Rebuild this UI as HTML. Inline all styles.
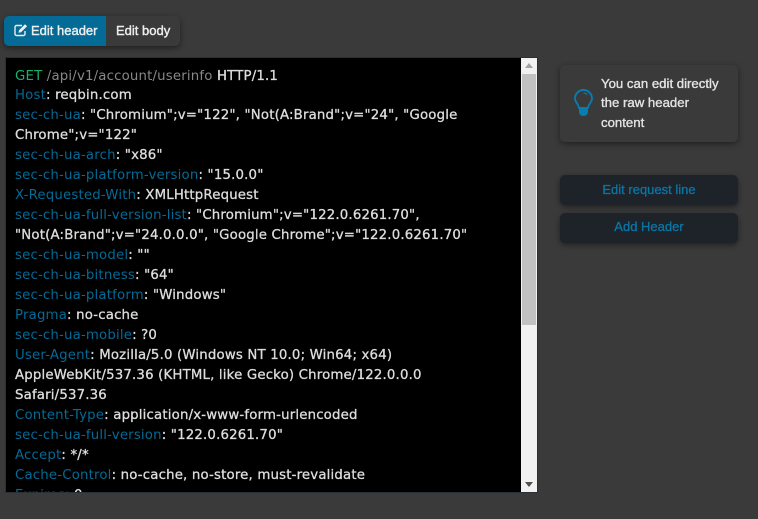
<!DOCTYPE html>
<html>
<head>
<meta charset="utf-8">
<style>
html,body{margin:0;padding:0;width:758px;height:519px;overflow:hidden;background:#3a3a3a;font-family:"Liberation Sans",sans-serif;}
.abs{position:absolute;box-sizing:border-box;}
.tabs{left:4px;top:16px;width:176px;height:30px;border-radius:5px;background:#3a3a3a;box-shadow:0 2px 6px rgba(0,0,0,.45);overflow:hidden;}
.tab1{position:absolute;left:0;top:0;width:102px;height:30px;background:#046a96;}
.tl{position:absolute;top:7px;font-size:13px;line-height:16px;color:#eee;white-space:nowrap;-webkit-text-stroke:.4px #eee;}
.editor{left:5px;top:57px;width:533px;height:436px;background:#000;border:1px solid #2b2f36;overflow:hidden;}
.ln{position:absolute;left:9px;font-family:"DejaVu Sans",sans-serif;font-size:13.3px;letter-spacing:.18px;line-height:20px;color:#ddd;white-space:nowrap;-webkit-text-stroke:.3px #ddd;}
.b{color:#046a96;-webkit-text-stroke:0}
.g{color:#14b46e;-webkit-text-stroke:0}
.p{color:#888;-webkit-text-stroke:0}
.sb{position:absolute;left:515px;top:0;width:16px;height:434px;background:#f1f1f1;}
.th{position:absolute;left:1px;top:16px;width:14px;height:251px;background:#c1c1c1;}
.card{left:560px;top:65px;width:178px;height:77px;background:#3a3a3a;border-radius:5px;box-shadow:0 2px 7px rgba(0,0,0,.45);}
.ct{position:absolute;left:41px;font-size:13.2px;line-height:19px;color:#e4e4e4;white-space:nowrap;-webkit-text-stroke:.35px #e4e4e4;}
.btn{left:560px;width:178px;height:30px;background:#1e232a;border-radius:5px;box-shadow:0 2px 6px rgba(0,0,0,.45);color:#0a76a6;font-size:13px;text-align:center;-webkit-text-stroke:.3px #0a76a6;}
</style>
</head>
<body>
<div class="abs tabs">
  <div class="tab1"></div>
  <svg style="position:absolute;left:10px;top:7px" width="14" height="14" viewBox="0 0 14 14"><path d="M11 8v3a1.500 1.500 0 0 1-1.500 1.500h-7A1.500 1.500 0 0 1 1 11V4a1.500 1.500 0 0 1 1.500-1.500H8" fill="none" stroke="#eee" stroke-width="1.400"/><path d="M4.500 9.800l.5-2.600L11 1.200l2.100 2.100-6 6z" fill="#eee"/></svg>
  <span class="tl" style="left:27px">Edit header</span>
  <span class="tl" style="left:112px">Edit body</span>
</div>
<div class="abs editor">
  <div class="ln" style="top:9px"><span class="g">GET</span> <span class="p">/api/v1/account/userinfo</span> HTTP/1.1</div>
  <div class="ln" style="top:28px"><span class="b">Host</span>: reqbin.com</div>
  <div class="ln" style="top:48px"><span class="b">sec-ch-ua</span>: "Chromium";v="122", "Not(A:Brand";v="24", "Google</div>
  <div class="ln" style="top:68px">Chrome";v="122"</div>
  <div class="ln" style="top:88px"><span class="b">sec-ch-ua-arch</span>: "x86"</div>
  <div class="ln" style="top:108px"><span class="b">sec-ch-ua-platform-version</span>: "15.0.0"</div>
  <div class="ln" style="top:128px"><span class="b">X-Requested-With</span>: XMLHttpRequest</div>
  <div class="ln" style="top:148px"><span class="b">sec-ch-ua-full-version-list</span>: "Chromium";v="122.0.6261.70",</div>
  <div class="ln" style="top:168px">"Not(A:Brand";v="24.0.0.0", "Google Chrome";v="122.0.6261.70"</div>
  <div class="ln" style="top:188px"><span class="b">sec-ch-ua-model</span>: ""</div>
  <div class="ln" style="top:208px"><span class="b">sec-ch-ua-bitness</span>: "64"</div>
  <div class="ln" style="top:228px"><span class="b">sec-ch-ua-platform</span>: "Windows"</div>
  <div class="ln" style="top:248px"><span class="b">Pragma</span>: no-cache</div>
  <div class="ln" style="top:268px"><span class="b">sec-ch-ua-mobile</span>: ?0</div>
  <div class="ln" style="top:288px"><span class="b">User-Agent</span>: Mozilla/5.0 (Windows NT 10.0; Win64; x64)</div>
  <div class="ln" style="top:308px">AppleWebKit/537.36 (KHTML, like Gecko) Chrome/122.0.0.0</div>
  <div class="ln" style="top:328px">Safari/537.36</div>
  <div class="ln" style="top:348px"><span class="b">Content-Type</span>: application/x-www-form-urlencoded</div>
  <div class="ln" style="top:368px"><span class="b">sec-ch-ua-full-version</span>: "122.0.6261.70"</div>
  <div class="ln" style="top:388px"><span class="b">Accept</span>: */*</div>
  <div class="ln" style="top:408px"><span class="b">Cache-Control</span>: no-cache, no-store, must-revalidate</div>
  <div class="ln" style="top:428px"><span class="b">Expires</span>: 0</div>
  <div class="sb">
    <div class="th"></div>
    <svg style="position:absolute;left:4px;top:5px" width="8" height="5"><path d="M0 5L4 0l4 5z" fill="#a3a3a3"/></svg>
    <svg style="position:absolute;left:4px;top:424px" width="8" height="5"><path d="M0 0h8L4 5z" fill="#505050"/></svg>
  </div>
</div>
<div class="abs card">
  <svg style="position:absolute;left:14px;top:24px" width="19" height="27" viewBox="0 0 19 27"><path d="M9.500 1a8.500 8.500 0 0 0-8.500 8.500c0 3.600 3.300 5.300 4.200 9.500h8.600c.9-4.200 4.200-5.900 4.200-9.500A8.500 8.500 0 0 0 9.500 1z" fill="none" stroke="#0a7cad" stroke-width="1.900"/><path d="M5 18.500h9V23a4.500 4 0 0 1-9 0z" fill="#0a7cad"/><path d="M9.500 4a5 5 0 0 1 4 2" fill="none" stroke="#0a7cad" stroke-width="1"/></svg>
  <div class="ct" style="top:9px">You can edit directly</div>
  <div class="ct" style="top:28px">the raw header</div>
  <div class="ct" style="top:48px">content</div>
</div>
<div class="abs btn" style="top:175px;line-height:30px">Edit request line</div>
<div class="abs btn" style="top:213px;line-height:27px">Add Header</div>
</body>
</html>
